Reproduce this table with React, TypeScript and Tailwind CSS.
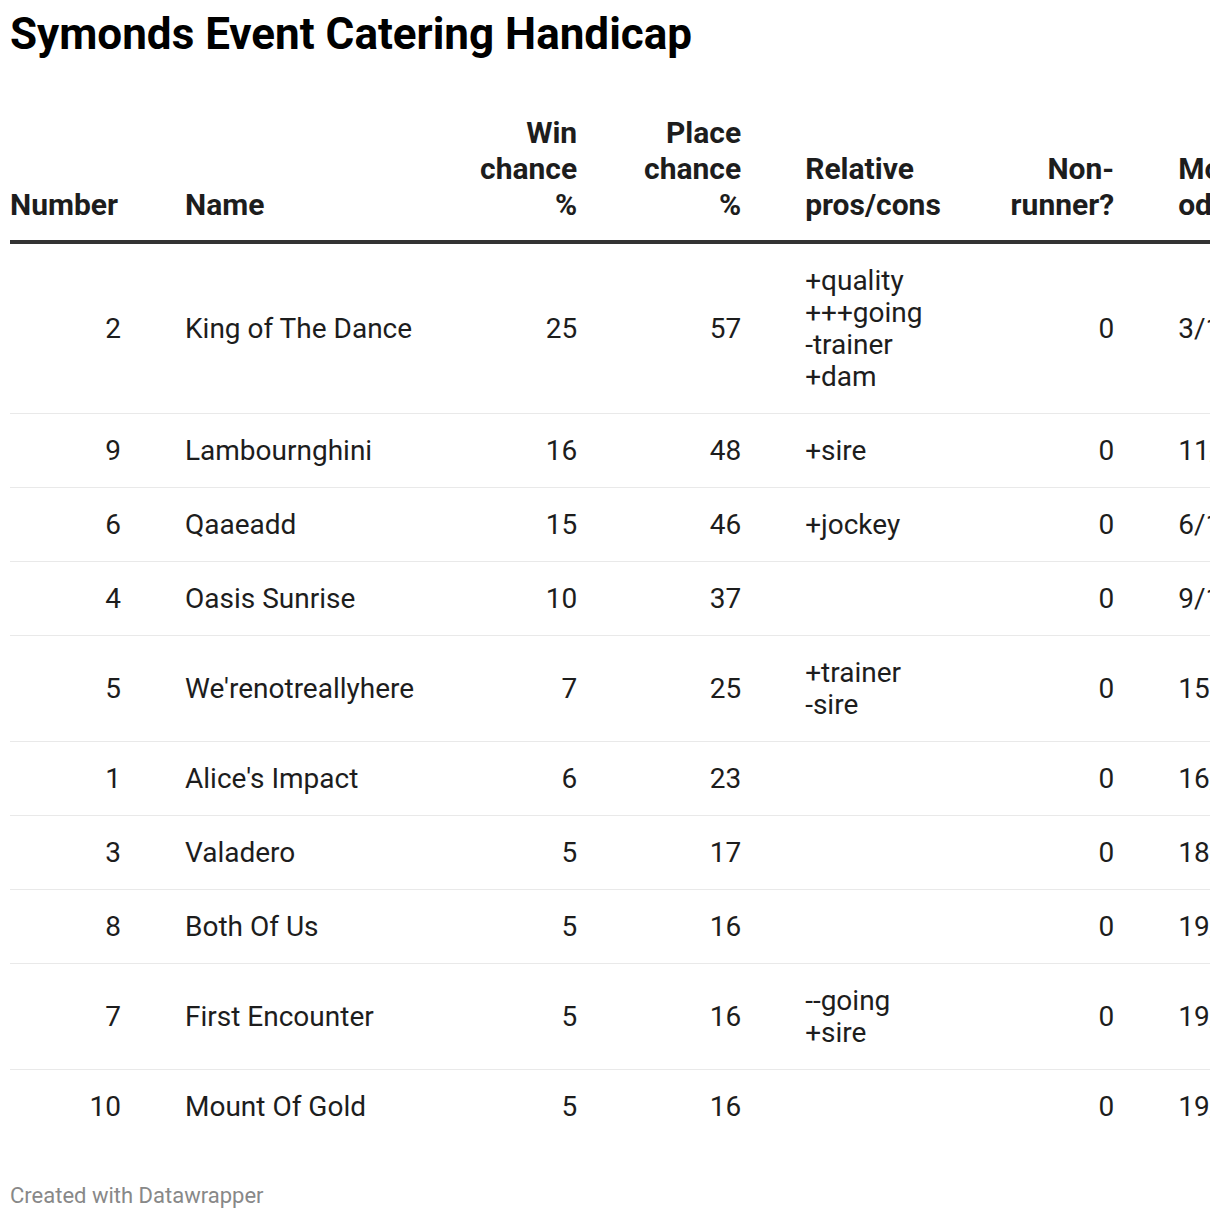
import React from "react";

type Runner = {
  num: number;
  name: string;
  win: number;
  place: number;
  notes: string[];
  nr: number;
  odds: string;
};

const runners: Runner[] = [
  { num: 2, name: "King of The Dance", win: 25, place: 57, notes: ["+quality", "+++going", "-trainer", "+dam"], nr: 0, odds: "3/1" },
  { num: 9, name: "Lambournghini", win: 16, place: 48, notes: ["+sire"], nr: 0, odds: "11/2" },
  { num: 6, name: "Qaaeadd", win: 15, place: 46, notes: ["+jockey"], nr: 0, odds: "6/1" },
  { num: 4, name: "Oasis Sunrise", win: 10, place: 37, notes: [], nr: 0, odds: "9/1" },
  { num: 5, name: "We'renotreallyhere", win: 7, place: 25, notes: ["+trainer", "-sire"], nr: 0, odds: "15/1" },
  { num: 1, name: "Alice's Impact", win: 6, place: 23, notes: [], nr: 0, odds: "16/1" },
  { num: 3, name: "Valadero", win: 5, place: 17, notes: [], nr: 0, odds: "18/1" },
  { num: 8, name: "Both Of Us", win: 5, place: 16, notes: [], nr: 0, odds: "19/1" },
  { num: 7, name: "First Encounter", win: 5, place: 16, notes: ["--going", "+sire"], nr: 0, odds: "19/1" },
  { num: 10, name: "Mount Of Gold", win: 5, place: 16, notes: [], nr: 0, odds: "19/1" },
];

const th = "align-bottom px-[32px] pt-[8px] pb-[17px] font-bold text-[30px] leading-[36px] border-b-[4px] border-[#333333]";
const td = "align-middle px-[32px] pt-[21px] pb-[20px] text-[28px] leading-[32px]";

export default function App() {
  return (
    <div className="bg-white text-[#1d1d1d] min-h-[1218px]" style={{ fontFamily: "Roboto, 'Liberation Sans', sans-serif" }}>
      <div className="mx-[10px] w-[1200px] overflow-hidden">
        <h1 className="pt-[8px] text-[44px] leading-[52px] font-bold text-black">
          Symonds Event Catering Handicap
        </h1>

        <table className="mt-[47px] border-separate border-spacing-0 w-max">
          <thead>
            <tr>
              <th className={`${th} pl-0 w-[143px] text-left`}>Number</th>
              <th className={`${th} w-[293px] text-left`}>Name</th>
              <th className={`${th} w-[163px] text-right`}>Win chance %</th>
              <th className={`${th} w-[164px] text-right`}>Place chance %</th>
              <th className={`${th} w-[203px] text-left`}>Relative pros/cons</th>
              <th className={`${th} w-[170px] text-right`}>Non-runner?</th>
              <th className={`${th} w-[164px] text-left`}>Model odds</th>
            </tr>
          </thead>
          <tbody>
            {runners.map((r, i) => {
              const line = i < runners.length - 1 ? "border-b border-[#e9e9e9]" : "";
              return (
                <tr key={r.num}>
                  <td className={`${td} ${line} pl-0 text-right`}>{r.num}</td>
                  <td className={`${td} ${line} text-left`}>{r.name}</td>
                  <td className={`${td} ${line} text-right`}>{r.win}</td>
                  <td className={`${td} ${line} text-right`}>{r.place}</td>
                  <td className={`${td} ${line} text-left`}>
                    {r.notes.map((n) => (
                      <div key={n}>{n}</div>
                    ))}
                  </td>
                  <td className={`${td} ${line} text-right`}>{r.nr}</td>
                  <td className={`${td} ${line} text-left`}>{r.odds}</td>
                </tr>
              );
            })}
          </tbody>
        </table>

        <p className="mt-[40px] text-[22px] leading-[26px] text-[#888888]">Created with Datawrapper</p>
      </div>
    </div>
  );
}
